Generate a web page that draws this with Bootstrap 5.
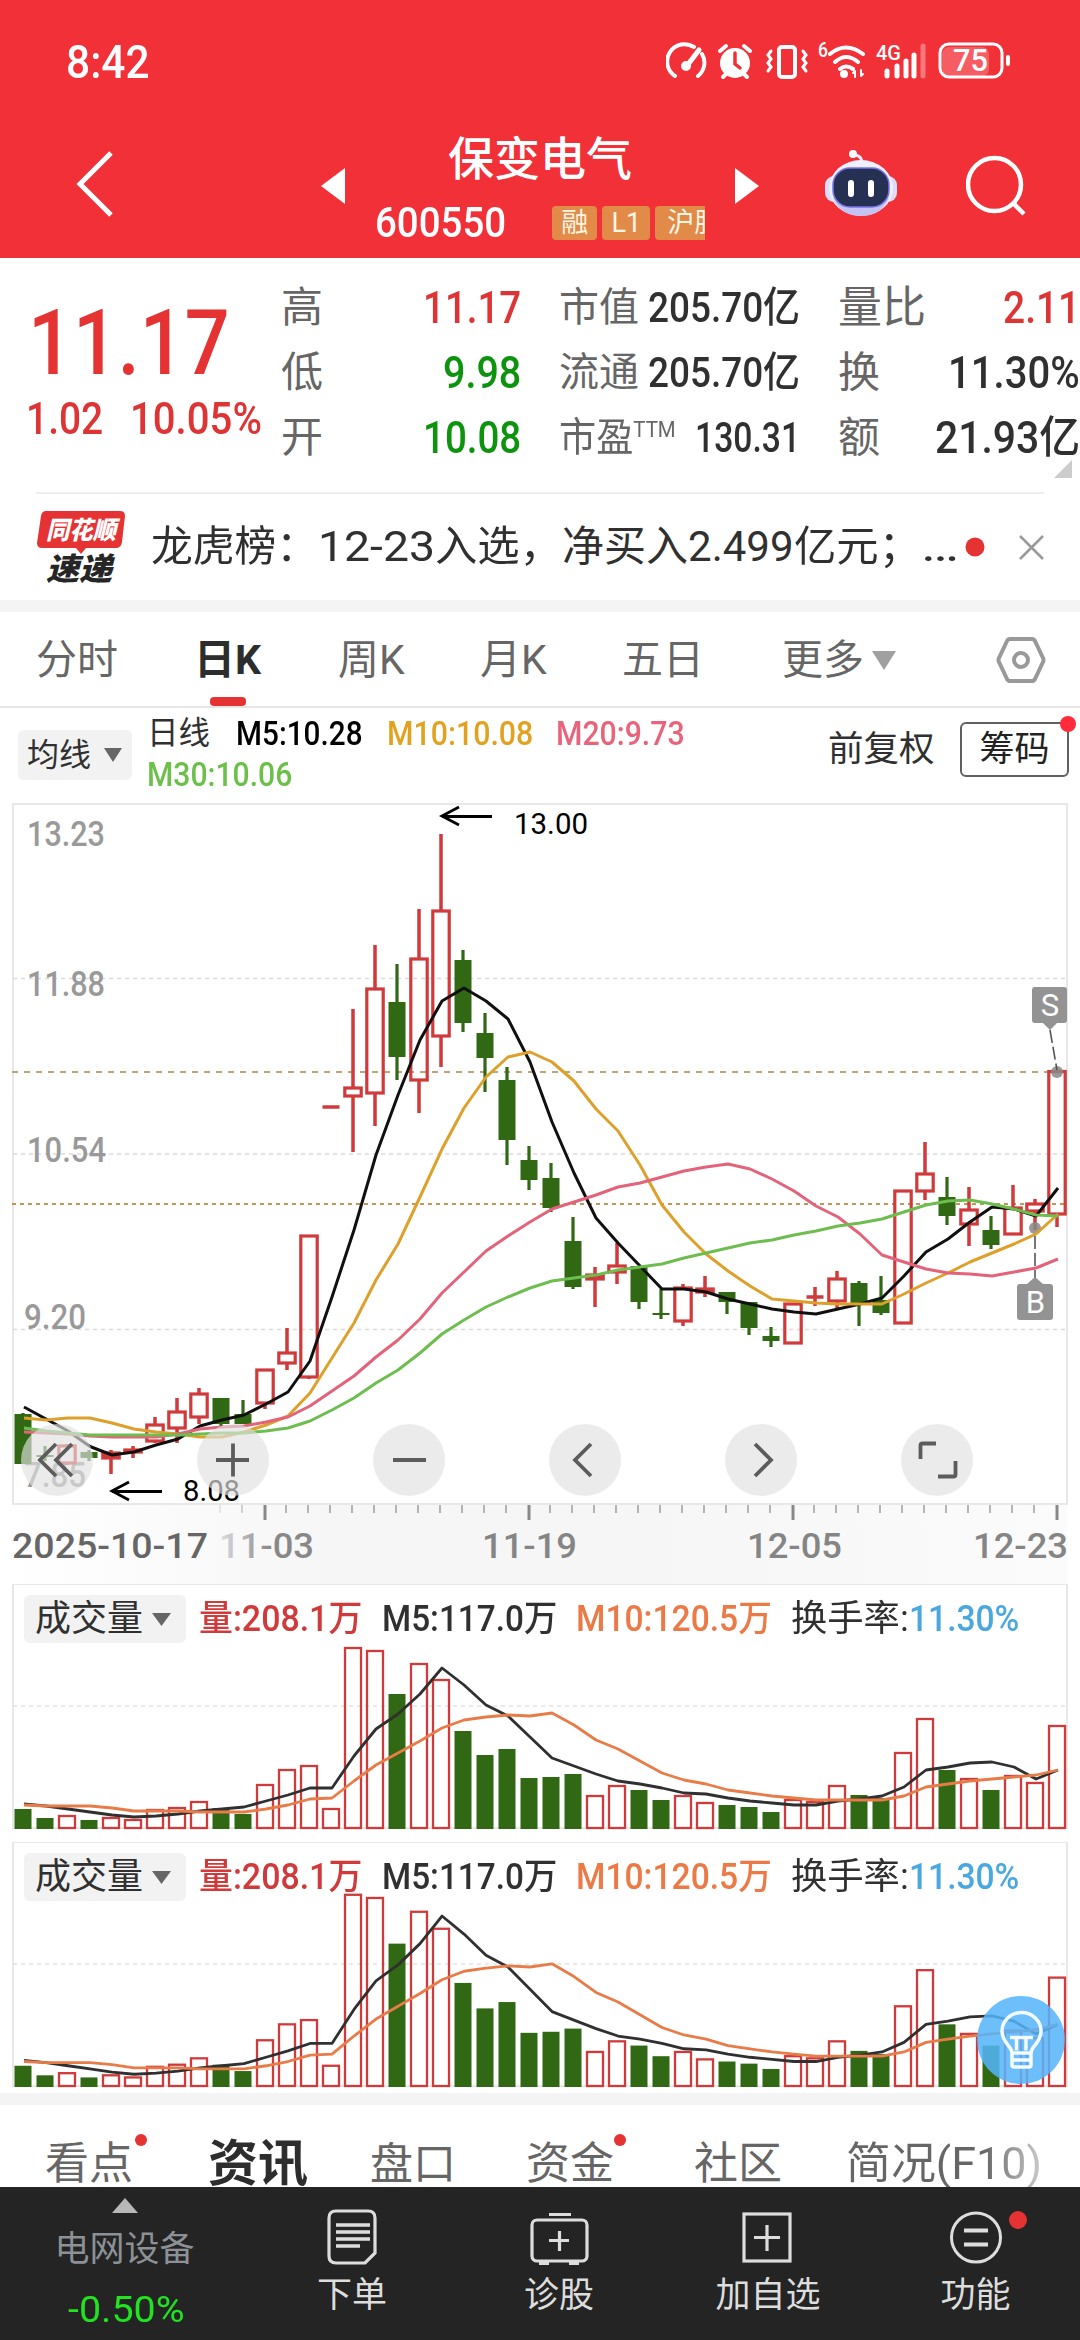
<!DOCTYPE html>
<html lang="zh-CN">
<head>
<meta charset="utf-8">
<meta name="viewport" content="width=device-width, initial-scale=1">
<title>保变电气 600550</title>
<link href="https://cdn.jsdelivr.net/npm/bootstrap@5.3.0/dist/css/bootstrap.min.css" rel="stylesheet">
<style>
body{width:1080px;height:2340px;overflow:hidden;background:#fff;color:#303030;font-family:Roboto,"Noto Sans CJK SC",sans-serif;line-height:1}
svg{display:block;flex:none}
svg text{font-family:Roboto,"Noto Sans CJK SC",sans-serif}
[data-w]{display:inline-block;white-space:nowrap;transform-origin:0 50%}
.num{font-weight:500}
.app-top{height:258px;background:#f23038;color:#fff}
.status-row{height:122px;padding:2px 68px 0 66px}
.clock{font-size:46px}
.nav-grid{display:grid;grid-template-columns:316px 448px 57px 145px 1fr;height:136px}
.nav-grid .center-col{display:grid;grid-template-columns:30px 1fr 30px;height:136px}
.stock-name{font-size:46px;line-height:50px;padding-top:12px;font-weight:500}
.code-line{height:40px;margin-top:19px;padding-left:29px}
.code-line .num{font-size:42px}
.tag-strip{margin-left:46px;width:153px;gap:5px}
.tag-chip{height:34px;background:#e28b48;border-radius:4px;color:#fff6e6;font-size:27px;line-height:34px;flex:none;text-align:center}
.quote-grid{display:grid;grid-template-columns:281px 240px 38px 241px 38px 242px;height:234px}
.big-price{font-size:90px;line-height:90px;color:#e53333;padding:41px 0 0 28px}
.chg{color:#dd3535;font-size:45px;padding-left:26px;margin-top:3px;gap:27px;line-height:54px}
.q-col{padding-top:17px}
.q-row{height:65.2px}
.q-key{font-size:42px;color:#666;font-weight:400}
.q-mid .q-key{font-size:40px}
.q-val{font-size:44px}
.q-mid .q-val{font-size:42px}
.up{color:#dd3535}.down{color:#0d930d}
.news-row{height:108px;margin:0 36px;border-top:2px solid #ededed;padding-left:1px}
.news-txt{font-size:42px;margin-left:24px;line-height:50px}
.band{height:12px;background:#f4f4f4}
.period-tabs{display:grid;grid-template-columns:36px 158px 144px 142px 142px 160px 214px 1fr;height:96px;border-bottom:2px solid #e6e6e6;font-size:41px;color:#666}
.period-tabs>div{display:flex;align-items:center;padding-top:2px}
.active-tab{color:#2d2d2d;font-weight:700;position:relative}
.active-tab i{position:absolute;left:16px;bottom:0;width:36px;height:9px;border-radius:4px;background:#e53333}
.ind-row{height:94px;padding-left:18px}
.drop-btn{background:#f2f2f2;border-radius:6px;color:#303030}
.ma-btn{width:114px;height:50px;font-size:32px;padding-left:9px}
.ma-list{width:562px;margin-left:15px;font-size:33px;height:84px}
.ma-line{height:41px}
.adj{font-size:35.5px;margin-left:119px;width:128px}
.chip-btn{width:109px;height:55px;border:2px solid #606060;border-radius:6px;font-size:35px;color:#222;position:relative}
.dot-red{position:absolute;border-radius:50%;background:#e53333}
.vol-box{position:relative;height:258px}
.vol-head{position:absolute;left:24px;top:11px;height:48px;font-size:36px;width:1040px}
.vol-btn{width:162px;height:48px;font-size:36px;padding-left:11px}
.bulb{position:absolute;left:977px;top:152px}
.info-tabs{height:82px;overflow:hidden;display:grid;grid-template-columns:45px 163px 162px 156px 168px 152px 1fr;font-size:44px;color:#666;line-height:60px;padding-top:29px}
.info-tabs>div{position:relative}
.bottom-bar{height:153px;background:#242424;color:#ddd;display:grid;grid-template-columns:249px 206px 208px 208px 209px;font-size:35px}
.bottom-bar .cell-b{position:relative;padding-top:20px}
.bottom-bar .cap-t{margin-top:2px;line-height:50px}
</style>
</head>
<body>
<header class="app-top">
  <div class="status-row d-flex align-items-center justify-content-between">
    <span class="num clock" data-w="84">8:42</span>
    <svg width="346" height="44" viewBox="664 39 346 44" fill="none" stroke="#fff" stroke-width="4" stroke-linecap="round">
      <path d="M673 75A17 17 0 0 1 692 46M700 53A17 17 0 0 1 696 75"/><path d="M684 66L697 49" stroke-width="5"/><circle cx="684" cy="65" r="3" fill="#fff"/>
      <circle cx="733" cy="62" r="15" fill="#fff" stroke="none"/><path d="M718 50l6-5M748 50l-6-5M724 73l-3 3M742 73l3 3"/><path d="M733 52v11l5 4" stroke="#f23038" stroke-width="3.5"/>
      <rect x="777" y="46" width="16" height="30" rx="3"/><path d="M769 50l-3 4 3 4-3 4 3 4-3 4M801 50l3 4-3 4 3 4-3 4 3 4" stroke-width="3"/>
      <path d="M828 53Q844 40 861 53M833 61Q844 51 856 61M838 68Q844 63 851 68"/><circle cx="842" cy="73" r="3" fill="#fff" stroke-width="2"/><path d="M853 70v6M859 69v6M851 72l2-2M859 75l2-2" stroke-width="2"/>
      <path d="M885 70v5M895 65v10M904 60v15M912 54v21" stroke-width="5"/><path d="M921 45v30" stroke-width="5" opacity=".35"/>
      <rect x="940" y="46" width="47" height="29" rx="7" fill="#fff" opacity=".22" stroke="none"/><rect x="938" y="43" width="62" height="33" rx="9" stroke-width="3"/><path d="M1006 56v7" stroke-width="4"/>
      <g fill="#fff" stroke="none" font-weight="500"><text x="816" y="56" font-size="20" textLength="10" lengthAdjust="spacingAndGlyphs">6</text><text x="874" y="59" font-size="21" textLength="25" lengthAdjust="spacingAndGlyphs">4G</text><text x="951" y="70" font-size="31" textLength="35" lengthAdjust="spacingAndGlyphs">75</text></g>
    </svg>
  </div>
  <div class="nav-grid">
    <svg width="120" height="110" viewBox="0 122 120 110"><path d="M111 153L80 184l31 31" fill="none" stroke="#fff" stroke-width="5"/></svg>
    <div class="center-col">
      <svg width="30" height="100" viewBox="316 122 30 100"><path d="M345 168v36l-24-18z" fill="#fff"/></svg>
      <div>
        <div class="stock-name text-center">保变电气</div>
        <div class="code-line d-flex align-items-center"><span class="num" data-w="131">600550</span>
          <div class="tag-strip d-flex overflow-hidden"><span class="tag-chip" style="width:45px">融</span><span class="tag-chip" style="width:48px">L1</span><span class="tag-chip ps-1" style="width:74px">沪股通</span></div>
        </div>
      </div>
      <svg width="30" height="100" viewBox="734 122 30 100"><path d="M735 168v36l24-18z" fill="#fff"/></svg>
    </div>
    <div></div>
    <svg width="90" height="110" viewBox="821 122 90 110">
      <path d="M862 163q0-7-7-8" stroke="#e8e6fb" stroke-width="3" fill="none"/><circle cx="853" cy="154" r="4" fill="#fff"/>
      <rect x="825" y="176" width="72" height="26" rx="9" fill="#dddcfb"/><ellipse cx="861" cy="188" rx="32" ry="28" fill="#f0effd"/><path d="M833 198q8 18 28 18t28-18z" fill="#c5c3f3"/>
      <rect x="833" y="168" width="56" height="39" rx="17" fill="#253052" stroke="#7773e6" stroke-width="1.5"/><path d="M851 183v11M871 183v11" stroke="#fff" stroke-width="6" stroke-linecap="round"/>
    </svg>
    <svg width="90" height="110" viewBox="966 122 90 110" fill="none" stroke="#fff" stroke-width="4.5"><circle cx="994.500" cy="184.500" r="26.500"/><path d="M1013 203l11 11"/></svg>
  </div>
</header>

<section class="quote-grid">
  <div>
    <div class="big-price num"><span data-w="202">11.17</span></div>
    <div class="chg d-flex num"><span data-w="77">1.02</span><span data-w="132">10.05%</span></div>
  </div>
  <div class="q-col">
    <div class="q-row d-flex justify-content-between align-items-center"><span class="q-key">高</span><span class="q-val num up" data-w="98">11.17</span></div>
    <div class="q-row d-flex justify-content-between align-items-center"><span class="q-key">低</span><span class="q-val num down" data-w="78">9.98</span></div>
    <div class="q-row d-flex justify-content-between align-items-center"><span class="q-key">开</span><span class="q-val num down" data-w="98">10.08</span></div>
  </div>
  <div></div>
  <div class="q-col q-mid">
    <div class="q-row d-flex justify-content-between align-items-center"><span class="q-key">市值</span><span class="q-val num" data-w="152">205.70亿</span></div>
    <div class="q-row d-flex justify-content-between align-items-center"><span class="q-key">流通</span><span class="q-val num" data-w="152">205.70亿</span></div>
    <div class="q-row d-flex justify-content-between align-items-center"><span class="q-key text-nowrap" data-w="117">市盈<sup style="font-size:22px;top:-.62em">TTM</sup></span><span class="q-val num" data-w="105">130.31</span></div>
  </div>
  <div></div>
  <div class="q-col position-relative">
    <div class="q-row d-flex justify-content-between align-items-center"><span class="q-key" style="font-size:44px">量比</span><span class="q-val num up" data-w="77">2.11</span></div>
    <div class="q-row d-flex justify-content-between align-items-center"><span class="q-key">换</span><span class="q-val num" data-w="132">11.30%</span></div>
    <div class="q-row d-flex justify-content-between align-items-center"><span class="q-key">额</span><span class="q-val num" data-w="145">21.93亿</span></div>
    <svg class="position-absolute" style="right:8px;top:202px" width="18" height="18"><path d="M18 0v18H0z" fill="#ccc"/></svg>
  </div>
</section>

<section class="news-row d-flex align-items-center">
  <svg width="90" height="74" viewBox="37 509 90 74"><path d="M46 510H120q5 0 5 5l-3 26q-1 6-6 6H86l-5 6-5-6H42q-5 0-5-5l4-27q1-5 5-5z" fill="#e53333"/>
    <g font-weight="900" font-style="italic"><text x="46" y="538" font-size="25" fill="#fff" textLength="70" lengthAdjust="spacingAndGlyphs">同花顺</text><text x="46" y="579" font-size="31" fill="#262626" textLength="66" lengthAdjust="spacingAndGlyphs">速递</text></g></svg>
  <div class="news-txt d-flex"><span data-w="167">龙虎榜：</span><span data-w="117">12-23</span><span data-w="127">入选，</span><span data-w="126">净买入</span><span data-w="106">2.499</span><span data-w="127">亿元；</span><span data-w="38">…</span></div>
  <svg class="ms-auto" width="80" height="30" viewBox="964 531 80 30"><circle cx="975" cy="546" r="9.500" fill="#e53333"/><path d="M1020 535l23 23M1043 535l-23 23" stroke="#999" stroke-width="2.500"/></svg>
</section>
<div class="band"></div>

<nav class="period-tabs">
  <div></div><div>分时</div><div class="active-tab">日K<i></i></div><div>周K</div><div>月K</div><div>五日</div>
  <div>更多<svg class="ms-2" width="24" height="20"><path d="M0 1h24L12 20z" fill="#a0a0a0"/></svg></div>
  <div><svg width="50" height="48" viewBox="0 0 50 48" fill="none" stroke="#999" stroke-width="4"><path d="M14 3h22q2 0 3 2l8 17q1 2 0 4l-8 17q-1 2-3 2H14q-2 0-3-2L3 26q-1-2 0-4L11 5q1-2 3-2z" stroke-linejoin="round"/><circle cx="25" cy="24" r="7"/></svg></div>
</nav>

<section class="ind-row d-flex align-items-center">
  <div class="drop-btn ma-btn d-flex align-items-center">均线<svg class="ms-2 ps-1" width="24" height="16"><path d="M1 1h18L10 15z" fill="#666"/></svg></div>
  <div class="ma-list">
    <div class="ma-line d-flex align-items-center num"><span class="fw-normal" style="font-size:31.5px;width:89px">日线</span><span class="text-black" style="width:151px"><span data-w="127">M5:10.28</span></span><span style="width:169px;color:#e2a220"><span data-w="146">M10:10.08</span></span><span style="color:#e8647a"><span data-w="129">M20:9.73</span></span></div>
    <div class="ma-line d-flex align-items-center num" style="color:#6cc04a"><span data-w="145">M30:10.06</span></div>
  </div>
  <div class="adj" style="margin-top:-10px">前复权</div>
  <div class="chip-btn d-flex align-items-center justify-content-center" style="margin:-12px 0 0 4px">筹码<span class="dot-red" style="width:16px;height:16px;right:-9px;top:-8px;background:#ff2a3a"></span></div>
</section>

<section><svg id="kline" width="1080" height="782" viewBox="0 802 1080 782"></svg></section>

<section class="vol-box" id="vol1">
  <svg width="1080" height="258"></svg>
  <div class="vol-head d-flex align-items-center num"></div>
</section>
<section class="vol-box" id="vol2" style="height:251px">
  <svg width="1080" height="251"></svg>
  <div class="vol-head d-flex align-items-center num"></div>
  <svg class="bulb" width="88" height="92" viewBox="977 1994 88 92"><circle cx="1021" cy="2040" r="44" fill="#55b4fb" opacity=".86"/><g fill="none" stroke="#f4fbff" stroke-width="3.500" stroke-linejoin="round"><path d="M1012 2053C1012 2046 1002 2043 1002 2031A19.500 18.500 0 0 1 1041 2031C1041 2043 1031 2046 1031 2053"/><path d="M1010 2037.500h23M1016.500 2037.500v13M1026 2037.500v13"/><path d="M1012 2053h19v12q0 2-2 2h-15q-2 0-2-2zM1012 2060h19"/></g></svg>
</section>
<div class="band"></div>

<nav class="info-tabs">
  <div></div>
  <div>看点<span class="dot-red" style="left:90px;top:0;width:12px;height:12px"></span></div>
  <div class="fw-bold" style="font-size:50px;color:#2d2d2d">资讯</div><div style="font-size:43px">盘口</div>
  <div>资金<span class="dot-red" style="left:88px;top:0;width:12px;height:12px"></span></div>
  <div>社区</div><div><span data-w="196" style="background:linear-gradient(90deg,#666 70%,#ccc);-webkit-background-clip:text;color:transparent">简况(F10)</span></div>
</nav>

<footer class="bottom-bar">
  <div class="text-center">
    <svg class="mx-auto mt-2" width="26" height="20"><path d="M13 3l13 15H0z" fill="#b8b8b8"/></svg>
    <div style="color:#8b9196;line-height:50px;margin-top:10px">电网设备</div>
    <div style="color:#21e321;font-size:36px;line-height:40px;margin-top:15px"><span class="ms-1" data-w="117">-0.50%</span></div>
  </div>
  <div class="cell-b text-center"><svg class="mx-auto" width="60" height="62" viewBox="322 2207 60 62" fill="none" stroke="#ddd" stroke-width="3.200"><path d="M336 2211h32q7 0 7 7v35l-10 10h-29q-7 0-7-7v-38q0-7 7-7z"/><path d="M336 2225h34M336 2232h34M336 2239h34M336 2246h24" stroke-width="3.500"/></svg><div class="cap-t">下单</div></div>
  <div class="cell-b text-center"><svg class="mx-auto" width="64" height="62" viewBox="527 2207 64 62" fill="none" stroke="#ddd" stroke-width="3.200"><rect x="532" y="2220" width="55" height="41" rx="5"/><path d="M549 2214.500h22M549 2240.500h20M559.500 2231v20"/><path d="M539 2263h10M569 2263h10" stroke-width="4"/></svg><div class="cap-t">诊股</div></div>
  <div class="cell-b text-center"><svg class="mx-auto" width="60" height="62" viewBox="737 2207 60 62" fill="none" stroke="#ddd" stroke-width="3.200"><rect x="744" y="2214" width="46" height="47"/><path d="M754 2237.500h26M767 2225v26"/></svg><div class="cap-t" style="margin-left:2px">加自选</div></div>
  <div class="cell-b text-center"><svg class="mx-auto" width="60" height="62" viewBox="945 2207 60 62" fill="none" stroke="#ddd" stroke-width="3"><circle cx="975" cy="2237.500" r="24.500"/><path d="M963 2230.500h24M963 2244.500h24" stroke-width="4"/></svg><div class="cap-t">功能</div><span class="dot-red" style="left:138px;top:24px;width:18px;height:18px"></span></div>
</footer>

<script src="https://cdn.jsdelivr.net/npm/bootstrap@5.3.0/dist/js/bootstrap.bundle.min.js"></script>
<script>
const RED='#d03a3a', GREEN='#306814', X=i=>23+22*i;
// [direction, body top, body bottom, high, low]
const K=[['g',1414,1464,1413,1464],['g',1455,1457,1446,1461],['r',1446,1463,1444,1465],['g',1452,1458,1450,1461],['r',1453,1458,1450,1474],['r',1450,1452,1446,1458],['r',1425,1441,1417,1443],['r',1412,1428,1398,1443],['r',1394,1417,1388,1424],['g',1398,1424,1398,1426],['g',1414,1424,1400,1424],['r',1370,1403,1369,1409],['r',1353,1363,1328,1370],['r',1236,1377,1235,1379],['r',1107,1107,1107,1107],['r',1088,1096,1009,1152],['r',989,1093,945,1126],['g',1002,1057,964,1080],['r',959,1080,909,1113],['r',911,1036,834,1067],['g',960,1023,950,1032],['g',1033,1058,1013,1092],['g',1080,1140,1067,1165],['g',1160,1180,1146,1190],['g',1178,1208,1163,1212],['g',1241,1287,1217,1289],['r',1275,1279,1267,1307],['r',1266,1272,1243,1284],['g',1266,1302,1266,1309],['g',1313,1315,1289,1319],['r',1288,1321,1284,1326],['r',1289,1292,1276,1297],['g',1292,1302,1292,1314],['g',1302,1328,1302,1335],['g',1336,1341,1327,1347],['r',1304,1343,1303,1344],['r',1297,1297,1287,1306],['r',1279,1301,1271,1308],['g',1283,1304,1281,1326],['g',1300,1313,1276,1315],['r',1191,1323,1190,1324],['r',1174,1191,1142,1200],['g',1197,1216,1177,1225],['r',1210,1224,1187,1246],['g',1230,1245,1216,1249],['r',1208,1234,1185,1235],['r',1204,1211,1199,1230],['r',1071.5,1214,1070,1227]];
const MA={
'#101010':[1407,1419,1431,1446.5,1455,1452,1445,1439,1426,1420,1415,1404,1392,1361,1297,1230,1155,1095,1040,1001,988,1001,1019,1062,1122,1173,1218,1243,1266,1289,1289,1292,1299,1304,1309,1312,1314,1309,1304,1298,1276,1252,1239,1222,1207,1209,1216,1188],
'#dda02a':[1418,1420,1418,1418,1423,1429,1432,1434,1437,1437,1432,1425,1416,1393,1358,1323,1280,1244,1197,1149,1108,1077,1057,1052,1062,1081,1109,1131,1165,1205,1232,1254,1271,1286,1299,1301,1303,1304,1304,1304,1294,1283,1273,1262,1253,1244,1234,1214],
'#e2637a':[1432,1433,1434,1436,1437,1437,1437,1434,1429,1427,1426,1422,1417,1406,1391,1376,1357,1340,1319,1293,1272,1251,1236,1222,1209,1202,1195,1187,1183,1177,1171,1167,1164,1169,1179,1191,1206,1217,1234,1255,1262,1269,1273,1274,1276,1272,1268,1259],
'#6dbd4f':[1428,1431,1433,1435,1435,1435,1435,1435,1434,1433,1433,1431,1428,1421,1410,1398,1383,1370,1353,1334,1320,1307,1297,1288,1281,1278,1275,1270,1267,1264,1258,1253,1248,1243,1240,1235,1231,1226,1223,1219,1212,1205,1201,1200,1204,1209,1215,1216]};
const line=(a,c,f=y=>y,w=3)=>`<polyline fill="none" stroke="${c}" stroke-width="${w}" stroke-linejoin="round" points="${a.map((y,i)=>(X(i)+1)+','+f(y)).join(' ')}"/>`;
const txt=(x,y,s,w,t,c,o='')=>`<text x="${x}" y="${y}" font-size="${s}" fill="${c}" textLength="${w}" lengthAdjust="spacingAndGlyphs" ${o}>${t}</text>`;
let s=`<defs><linearGradient id="ax"><stop offset="0" stop-color="#fff"/><stop offset=".3" stop-color="#f6f6f6"/><stop offset=".6" stop-color="#f6f6f6"/><stop offset="1" stop-color="#fbfbfb"/></linearGradient><linearGradient id="fade"><stop offset="0" stop-color="#ddd"/><stop offset=".55" stop-color="#888"/></linearGradient></defs>
<rect x="13" y="1504" width="1054" height="80" fill="url(#ax)"/><rect x="13" y="804" width="1054" height="700" fill="#fff" stroke="#e8e8e8" stroke-width="2"/>`;
[978.5,1154,1329.5].forEach(y=>s+=`<path d="M13 ${y}H1066" stroke="#dcdcdc" stroke-width="1.500" stroke-dasharray="4 4"/>`);
s+=`<path d="M12 1072H1056" stroke="#bca676" stroke-width="2" stroke-dasharray="6 6"/><path d="M12 1204H1066" stroke="#c39556" stroke-width="2.200" stroke-dasharray="4 4"/>`;
[[28,846,'13.23',78],[28,996,'11.88',78],[28,1162,'10.54',79],[25,1329,'9.20',62],[25,1487,'7.85',62]].forEach(t=>s+=txt(t[0]-1,t[1],35,t[3],t[2],'#999','font-weight="500"'));
K.forEach(([d,a,b,h,l],i)=>{const x=X(i);
 if(d=='g')s+=`<path d="M${x} ${h}V${l}" stroke="${GREEN}" stroke-width="3.200"/><rect x="${x-8.5}" y="${a}" width="17" height="${b-a}" fill="${GREEN}"/>`;
 else if(a==b)s+=`<path d="M${x-8.5} ${a}h17M${x} ${h}V${l}" stroke="${RED}" stroke-width="3.500"/>`;
 else s+=`<path d="M${x} ${h}V${a}M${x} ${b}V${l}" stroke="${RED}" stroke-width="3.500"/><rect x="${x-8.2}" y="${a}" width="16.400" height="${b-a}" fill="${b-a<6?RED:'none'}" stroke="${RED}" stroke-width="3.200"/>`;});
s+=`<g fill="#888" opacity=".85"><circle cx="1035" cy="1228" r="6"/><circle cx="1057" cy="1072" r="6"/></g>`;
for(const c in MA)s+=line(MA[c],c);
s+=`<g stroke="#555" stroke-width="1.600" stroke-dasharray="13 4"><path d="M1050 1030L1057 1070"/><path d="M1035 1236V1280"/></g>
<path d="M1035 987h29q3 0 3 3v30q0 3-3 3h-7l-7 7-7-7h-8q-3 0-3-3v-30q0-3 3-3zM1020 1284h7l8-7 8 7h7q3 0 3 3v30q0 3-3 3h-30q-3 0-3-3v-30q0-3 3-3z" fill="#939393"/>
<text x="1050" y="1016" font-size="31" text-anchor="middle" fill="#fff">S</text><text x="1035.500" y="1313" font-size="31" text-anchor="middle" fill="#fff">B</text>
<path d="M459 807L442 816l17 9M442 816.500H492M129 1482l-17 9 17 9M112 1491.500H162" fill="none" stroke="#000" stroke-width="2.800"/>`;
s+=txt(514,834,30,74,'13.00','#000')+txt(183,1501,30,57,'8.08','#000');
[57,233,409,585,761,937].forEach(x=>s+=`<circle cx="${x}" cy="1460" r="36" fill="#e0e0e0" opacity=".66"/>`);
s+=`<g fill="none" stroke="#5c5c5c" stroke-width="3.800"><path d="M56 1444l-16 16 16 16M72 1444l-16 16 16 16M216 1460h33M233 1443.500v33M393 1460h33M591 1444l-16 16 16 16M755 1444l16 16-16 16"/><path d="M920.500 1459v-13.500q0-2 2-2h13.500M955.500 1461v13.500q0 2-2 2h-15.500"/></g>`;
for(let i=9;i<48;i++){const m=(i-11)%12==0;s+=`<path d="M${X(i)-(m?0:1)} 1505v${m?15:8}" stroke="#888" stroke-width="${m?3:1.2}" opacity="${i<11?(i-8)*.3:1}"/>`;}
s+=txt(12,1558,34.5,196,'2025-10-17','#666','font-weight="500"')+txt(219,1558,34.5,95,'11-03','url(#fade)','font-weight="500"');
[[482,'11-19'],[747,'12-05'],[973,'12-23']].forEach(t=>s+=txt(t[0],1558,34.5,95,t[1],'#858585','font-weight="500"'));
document.getElementById('kline').innerHTML=s;

const V=[1809,1818,1816,1820,1818,1820,1810,1808,1802,1808,1814,1785,1770,1766,1809,1648,1651,1694,1664,1680,1731,1755,1749,1778,1777,1774,1796,1786,1790,1800,1796,1803,1805,1807,1812,1800,1802,1786,1795,1798,1753,1719,1770,1779,1790,1776,1783,1726];
const V5=[1804,1806,1809,1812,1815,1817,1816,1814,1811,1809,1807,1801,1795,1788,1788,1756,1729,1714,1694,1668,1685,1705,1716,1737,1758,1766,1774,1781,1784,1788,1793,1794,1798,1801,1803,1805,1805,1801,1799,1796,1787,1770,1767,1763,1762,1767,1779,1770];
const V10=[1805,1806,1806,1806,1808,1811,1811,1811,1812,1812,1812,1809,1805,1799,1798,1781,1765,1753,1741,1728,1720,1717,1715,1716,1713,1725,1740,1749,1761,1773,1780,1784,1790,1793,1796,1798,1800,1800,1800,1800,1796,1787,1784,1781,1779,1777,1775,1770];
function vol(id,k,dash){
 const f=y=>245-(1829-y)*k;
 let s=`<rect x="13" y="0" width="1054" height="244" fill="#fff" stroke="#e8e8e8" stroke-width="2"/><path d="M13 ${dash}H1066" stroke="#e2e2e2" stroke-width="1.500" stroke-dasharray="4 4"/>`;
 V.forEach((v,i)=>{const y=f(v);s+=K[i][0]=='g'?`<rect x="${X(i)-8.5}" y="${y}" width="17" height="${245-y}" fill="${GREEN}"/>`:`<rect x="${X(i)-8}" y="${y}" width="16" height="${244-y}" fill="none" stroke="${RED}" stroke-width="2.300"/>`});
 s+=line(V5,'#303030',f,2.8)+line(V10,'#e87c48',f,2.8);
 const box=document.getElementById(id);box.querySelector('svg').innerHTML=s;
 box.querySelector('.vol-head').innerHTML=`<div class="drop-btn vol-btn fw-normal d-flex align-items-center">成交量<svg class="ms-2" width="22" height="15"><path d="M1 1h19L10.500 14z" fill="#666"/></svg></div><span style="width:182px;padding-left:13px;color:${RED}"><span data-w="163">量:208.1万</span></span><span style="width:195px;padding-left:14px"><span data-w="175">M5:117.0万</span></span><span style="width:214px;padding-left:13px;color:#ec7a46"><span data-w="196">M10:120.5万</span></span><span class="fw-normal" style="padding-left:14px"><span data-w="118">换手率:</span></span><span style="color:#4aa8de"><span data-w="110">11.30%</span></span>`;
}
vol('vol1',1,122);vol('vol2',1.062,122);
document.querySelectorAll('[data-w]').forEach(e=>{const w=+e.dataset.w,n=e.offsetWidth;e.style.transform=`scaleX(${w/n})`;e.style.marginRight=(w-n)+'px';});
</script>
</body>
</html>
